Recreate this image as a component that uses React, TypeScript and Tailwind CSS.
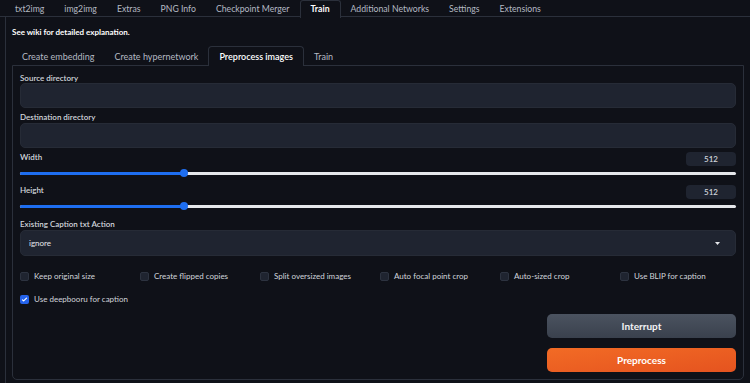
import { useState } from 'react';

const topTabs = ['txt2img', 'img2img', 'Extras', 'PNG Info', 'Checkpoint Merger', 'Train', 'Additional Networks', 'Settings', 'Extensions'];
const subTabs = ['Create embedding', 'Create hypernetwork', 'Preprocess images', 'Train'];

const options = [
  { label: 'Keep original size', checked: false },
  { label: 'Create flipped copies', checked: false },
  { label: 'Split oversized images', checked: false },
  { label: 'Auto focal point crop', checked: false },
  { label: 'Auto-sized crop', checked: false },
  { label: 'Use BLIP for caption', checked: false },
  { label: 'Use deepbooru for caption', checked: true },
];

function Slider({ label, value }: { label: string; value: number }) {
  // thumb sits a bit past the raw ratio, like the native range input
  const pct = ((value - 64) / (2048 - 64)) * 100 + 0.3;
  return (
    <div className="flex flex-col">
      <div className="flex items-end justify-between h-[16px]">
        <span className="text-[8px] font-semibold text-[#d1d5db] leading-none mb-[5px]">{label}</span>
        <div className="w-[50px] h-[14px] rounded-[4px] bg-[#1f2430] flex items-center justify-center text-[8px] font-semibold text-[#d1d5db]">
          {value}
        </div>
      </div>
      <div className="relative h-[14px] flex items-center">
        <div className="w-full h-[3px] rounded-full bg-[#e5e7eb]" />
        <div className="absolute left-0 top-[5.5px] h-[3px] rounded-full bg-[#1e6ef0]" style={{ width: `${pct}%` }} />
        <div
          className="absolute top-[3px] w-[8px] h-[8px] rounded-full bg-[#1e6ef0] -ml-[4px]"
          style={{ left: `${pct}%` }}
        />
      </div>
    </div>
  );
}

function Checkbox({ label, checked }: { label: string; checked: boolean }) {
  return (
    <label className="flex items-center gap-[5px] h-[12px]">
      <span
        className={`w-[9px] h-[9px] rounded-[2px] flex items-center justify-center ${
          checked ? 'bg-[#2563eb]' : 'bg-[#1f2430] border border-[#2d3340]'
        }`}
      >
        {checked && (
          <svg className="w-[7px] h-[7px] text-white" viewBox="0 0 24 24" fill="none" stroke="currentColor">
            <path strokeLinecap="round" strokeLinejoin="round" strokeWidth={4} d="M5 13l4 4L19 7" />
          </svg>
        )}
      </span>
      <span className="text-[8px] text-[#d1d5db] leading-none whitespace-nowrap">{label}</span>
    </label>
  );
}

export default function App() {
  const [tab] = useState('Train');
  const [sub] = useState('Preprocess images');

  return (
    <div className="w-[750px] h-[383px] overflow-hidden bg-[#0f1118] text-white" style={{ fontFamily: 'Lato, "Noto Sans", sans-serif' }}>
      {/* Top tabs */}
      <div className="flex h-[17px] pl-[5px] border-b border-[#2b303b]">
        {topTabs.map((t) => (
          <div
            key={t}
            className={`px-[10px] h-[18px] flex items-center text-[8.7px] leading-none ${
              t === tab
                ? 'border border-b-0 border-[#2b303b] bg-[#0f1118] text-white font-bold rounded-t-[3px] -mb-px'
                : 'text-[#b4b9c3]'
            }`}
          >
            {t}
          </div>
        ))}
      </div>

      <div className="ml-[5px] h-[366px] border-l border-[#2b303b] pl-[6px] pr-[6px]">
        <div className="h-[29px] flex items-center">
          <span className="text-[8px] font-bold text-white leading-none mt-[1px]">See wiki for detailed explanation.</span>
        </div>

        {/* Sub tabs */}
        <div className="flex h-[19px]">
          {subTabs.map((t) => (
            <div
              key={t}
              className={`px-[10px] h-[20px] flex items-center text-[9px] leading-none ${
                t === sub
                  ? 'border border-b-0 border-[#2b303b] bg-[#0f1118] text-white font-semibold rounded-t-[4px] z-10'
                  : 'text-[#b4b9c3]'
              }`}
            >
              {t}
            </div>
          ))}
        </div>

        {/* Panel */}
        <div className="w-[732px] h-[315px] border border-[#2b303b] rounded-b-[5px] px-[7px] pt-[6px]">
          <div className="text-[8px] font-semibold text-[#d1d5db] leading-none h-[11px] flex items-center">Source directory</div>
          <div className="h-[25px] rounded-[5px] bg-[#1f2430] border border-[#262b36]" />

          <div className="text-[8px] font-semibold text-[#d1d5db] leading-none h-[15px] flex items-end pb-[2px]">Destination directory</div>
          <div className="h-[25px] rounded-[5px] bg-[#1f2430] border border-[#262b36]" />

          <div className="mt-[2px]">
            <Slider label="Width" value={512} />
          </div>
          <div className="mt-[3px]">
            <Slider label="Height" value={512} />
          </div>

          <div className="text-[8px] font-semibold text-[#d1d5db] leading-none h-[17px] flex items-end pb-[2px]">Existing Caption txt Action</div>
          <div className="h-[26px] rounded-[5px] bg-[#1f2430] border border-[#262b36] flex items-center justify-between pl-[8px] pr-[15px]">
            <span className="text-[8px] text-[#e5e7eb] leading-none">ignore</span>
            <svg className="w-[5px] h-[3px]" viewBox="0 0 5 3">
              <path d="M0 0 L5 0 L2.5 3 Z" fill="#e5e7eb" />
            </svg>
          </div>

          <div className="grid grid-cols-[repeat(6,120px)] mt-[14px] gap-y-[11px]">
            {options.map((o) => (
              <Checkbox key={o.label} label={o.label} checked={o.checked} />
            ))}
          </div>

          <div className="flex justify-end mt-[9px]">
            <div className="w-[189px] flex flex-col gap-[10px]">
              <button className="h-[24px] rounded-[5px] bg-gradient-to-b from-[#4b5360] to-[#3a414d] text-[10px] font-bold text-[#f3f4f6]">
                Interrupt
              </button>
              <button className="h-[24px] rounded-[5px] bg-gradient-to-br from-[#f26b25] to-[#e5531f] text-[10px] font-bold text-white">
                Preprocess
              </button>
            </div>
          </div>
        </div>
      </div>
    </div>
  );
}
